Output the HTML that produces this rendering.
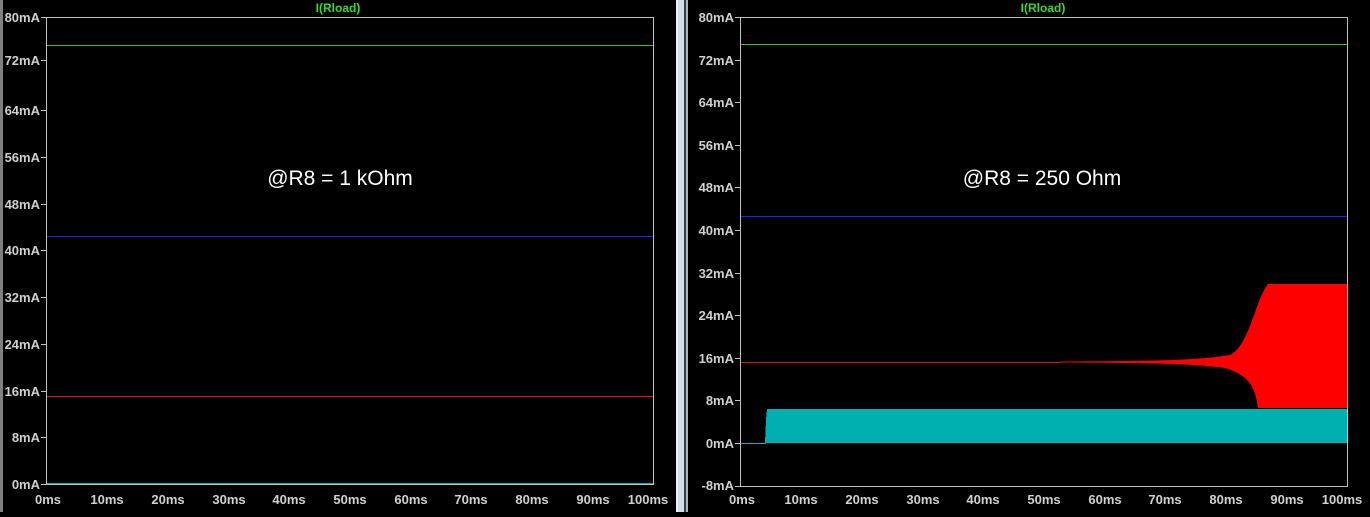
<!DOCTYPE html>
<html><head><style>
body{margin:0;background:#000;width:1370px;height:512px;overflow:hidden}
svg text{font-family:"Liberation Sans",sans-serif}
</style></head><body>
<svg width="1370" height="512" xmlns="http://www.w3.org/2000/svg" shape-rendering="crispEdges">
<rect width="1370" height="512" fill="#000"/>
<rect x="0" y="0" width="3" height="512" fill="#808080"/>
<rect x="676" y="0" width="9" height="512" fill="#d4dce8"/>
<rect x="676" y="0" width="2" height="512" fill="#eef2f7"/>
<rect x="684" y="0" width="2" height="512" fill="#404040"/>
<rect x="686" y="0" width="2" height="512" fill="#a8b4c8"/>
<g fill="#34d934" font-size="12" font-weight="bold" text-anchor="middle"><text x="338" y="12">I(Rload)</text><text x="1043" y="12">I(Rload)</text></g>
<!-- left plot -->
<rect x="46.5" y="17.5" width="607" height="467" fill="none" stroke="#c0c0c0"/>
<rect x="47" y="45" width="606" height="1" fill="#2ec42e"/>
<rect x="47" y="236" width="606" height="1" fill="#2222ee"/>
<rect x="47" y="396" width="606" height="1" fill="#e01010"/>
<rect x="47" y="483" width="606" height="1" fill="#00b0b0"/>
<g fill="#d0d0d0" font-size="13" font-weight="bold" text-anchor="end">
<text x="40" y="22">80mA</text><text x="40" y="65">72mA</text><text x="40" y="115">64mA</text><text x="40" y="162">56mA</text><text x="40" y="209">48mA</text><text x="40" y="255">40mA</text><text x="40" y="302">32mA</text><text x="40" y="349">24mA</text><text x="40" y="396">16mA</text><text x="40" y="442">8mA</text><text x="40" y="489">0mA</text>
</g>
<g stroke="#c0c0c0"><path d="M41 17.5h5M41 60.5h5M41 110.5h5M41 157.5h5M41 204.5h5M41 250.5h5M41 297.5h5M41 344.5h5M41 391.5h5M41 437.5h5M41 484.5h5"/></g>
<g fill="#d0d0d0" font-size="13" font-weight="bold" text-anchor="middle">
<text x="48" y="504">0ms</text><text x="107" y="504">10ms</text><text x="168" y="504">20ms</text><text x="229" y="504">30ms</text><text x="289" y="504">40ms</text><text x="350" y="504">50ms</text><text x="411" y="504">60ms</text><text x="471" y="504">70ms</text><text x="532" y="504">80ms</text><text x="593" y="504">90ms</text><text x="648" y="504">100ms</text>
</g>
<text x="340" y="185" fill="#fff" font-size="21" text-anchor="middle" shape-rendering="auto">@R8 = 1 kOhm</text>
<!-- right plot -->
<path d="M1268 284 L1347 284 L1347 408 L1258 408 C1255 390 1252 376 1225 368 C1190 363 1140 363 1060 362.5 L1060 361.5 C1140 361 1195 361 1230 355 C1250 345 1255 300 1268 284Z" fill="#ff0000" shape-rendering="auto"/>
<rect x="741" y="362" width="320" height="1" fill="#e01010"/>
<rect x="741" y="443" width="25" height="1" fill="#00b0b0"/>
<path d="M765 443 L766 420 L767 409 L1347 409 L1347 443Z" fill="#00b0b0"/>
<rect x="740.5" y="17.5" width="607" height="469" fill="none" stroke="#c0c0c0"/>
<rect x="741" y="44" width="606" height="1" fill="#2ec42e"/>
<rect x="741" y="216" width="606" height="1" fill="#2222ee"/>
<g fill="#d0d0d0" font-size="13" font-weight="bold" text-anchor="end">
<text x="734" y="22">80mA</text><text x="734" y="65">72mA</text><text x="734" y="107">64mA</text><text x="734" y="150">56mA</text><text x="734" y="192">48mA</text><text x="734" y="235">40mA</text><text x="734" y="278">32mA</text><text x="734" y="320">24mA</text><text x="734" y="363">16mA</text><text x="734" y="405">8mA</text><text x="734" y="448">0mA</text><text x="734" y="490">-8mA</text>
</g>
<g stroke="#c0c0c0"><path d="M735 17.5h5M735 60.5h5M735 102.5h5M735 145.5h5M735 187.5h5M735 230.5h5M735 273.5h5M735 315.5h5M735 358.5h5M735 400.5h5M735 443.5h5M735 486.5h5"/></g>
<g fill="#d0d0d0" font-size="13" font-weight="bold" text-anchor="middle">
<text x="742" y="504">0ms</text><text x="801" y="504">10ms</text><text x="862" y="504">20ms</text><text x="923" y="504">30ms</text><text x="983" y="504">40ms</text><text x="1044" y="504">50ms</text><text x="1105" y="504">60ms</text><text x="1165" y="504">70ms</text><text x="1226" y="504">80ms</text><text x="1287" y="504">90ms</text><text x="1342" y="504">100ms</text>
</g>
<text x="1042" y="185" fill="#fff" font-size="21" text-anchor="middle" shape-rendering="auto">@R8 = 250 Ohm</text>
</svg>
</body></html>
